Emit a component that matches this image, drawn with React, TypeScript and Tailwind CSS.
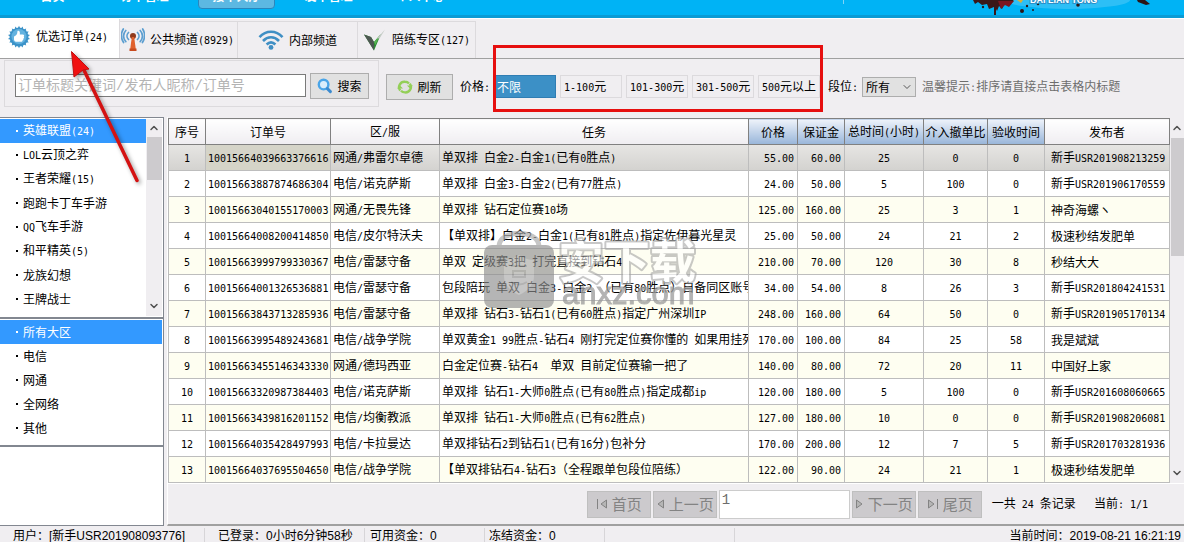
import React from 'react';
import { ChevronDown, ChevronUp } from 'lucide-react';

type Order = [string, string, string, string, string, string, string, string, string];

const NAV = ['首页', '订单管理', '接单大厅', '发单管理', '个人中心'];

const GAMES = ['英雄联盟(24)', 'LOL云顶之弈', '王者荣耀(15)', '跑跑卡丁车手游', 'QQ飞车手游', '和平精英(5)', '龙族幻想', '王牌战士'];

const AREAS = ['所有大区', '电信', '网通', '全网络', '其他'];

const PRICES = ['不限', '1-100元', '101-300元', '301-500元', '500元以上'];

const COLUMNS = [
  { title: '序号', width: 'w-[37px]', sortable: false },
  { title: '订单号', width: 'w-[125px]', sortable: false },
  { title: '区/服', width: 'w-[109px]', sortable: false },
  { title: '任务', width: '', sortable: false },
  { title: '价格', width: 'w-[49px]', sortable: true },
  { title: '保证金', width: 'w-[47px]', sortable: true },
  { title: '总时间(小时)', width: 'w-[79px]', sortable: true },
  { title: '介入撤单比', width: 'w-[64px]', sortable: true },
  { title: '验收时间', width: 'w-[57px]', sortable: true },
  { title: '发布者', width: 'w-[125px]', sortable: false },
];

const ORDERS: Order[] = [
  ['10015664039663376616', '网通/弗雷尔卓德', '单双排 白金2-白金1(已有0胜点)', '55.00', '60.00', '25', '0', '0', '新手USR201908213259'],
  ['10015663887874686304', '电信/诺克萨斯', '单双排 白金3-白金2(已有77胜点)', '24.00', '50.00', '5', '100', '0', '新手USR201906170559'],
  ['10015663040155170003', '网通/无畏先锋', '单双排 钻石定位赛10场', '125.00', '160.00', '25', '3', '1', '神奇海螺ヽ'],
  ['10015664008200414850', '电信/皮尔特沃夫', '【单双排】白金2-白金1(已有81胜点)指定佐伊暮光星灵', '25.00', '50.00', '24', '21', '2', '极速秒结发肥单'],
  ['10015663999799330367', '电信/雷瑟守备', '单双 定级赛3把 打完直接到钻石4', '210.00', '70.00', '120', '30', '8', '秒结大大'],
  ['10015664001326536881', '电信/雷瑟守备', '包段陪玩 单双 白金3-白金2 （已有80胜点）自备同区账号', '34.00', '54.00', '8', '26', '3', '新手USR201804241531'],
  ['10015663843713285936', '电信/雷瑟守备', '单双排 钻石3-钻石1(已有60胜点)指定广州深圳IP', '248.00', '160.00', '64', '50', '0', '新手USR201905170134'],
  ['10015663995489243681', '电信/战争学院', '单双黄金1 99胜点-钻石4 刚打完定位赛你懂的 如果用挂死', '170.00', '100.00', '84', '25', '58', '我是斌斌'],
  ['10015663455146343330', '网通/德玛西亚', '白金定位赛-钻石4  单双 目前定位赛输一把了', '140.00', '80.00', '72', '20', '11', '中国好上家'],
  ['10015663320987384403', '电信/诺克萨斯', '单双排 钻石1-大师0胜点(已有80胜点)指定成都ip', '120.00', '180.00', '5', '100', '0', '新手USR201608060665'],
  ['10015663439816201152', '电信/均衡教派', '单双排 钻石1-大师0胜点(已有62胜点)', '127.00', '180.00', '10', '0', '0', '新手USR201908206081'],
  ['10015664035428497993', '电信/卡拉曼达', '单双排钻石2到钻石1(已有16分)包补分', '170.00', '200.00', '12', '7', '5', '新手USR201703281936'],
  ['10015664037695504650', '电信/战争学院', '【单双排钻石4-钻石3（全程跟单包段位陪练）', '122.00', '90.00', '24', '21', '1', '极速秒结发肥单'],
];

// Latin runs are set in a half-width monospace next to the full-width Chinese
function Mixed({ text }: { text: string }) {
  return (
    <>
      {text.split(/([\x20-\x7e]+)/).map((part, i) =>
        i % 2 === 1 ? (
          <span key={i} className="font-['DejaVu_Sans_Mono',monospace] text-[10px] whitespace-pre">{part}</span>
        ) : (
          part
        )
      )}
    </>
  );
}

function BadgeIcon() {
  const teeth = Array.from({ length: 18 }, (_, i) => i * 20);
  return (
    <svg width="24" height="24" viewBox="0 0 24 24">
      {teeth.map((a) => (
        <path key={a} d="M10.4 4 L12 .8 L13.6 4Z" fill="#3f95c9" transform={`rotate(${a} 12 12)`} />
      ))}
      <circle cx="12" cy="12" r="9.4" fill="#3b92c8" />
      <circle cx="12" cy="11.5" r="7.6" fill="#63b2df" />
      <path d="M7 11.500c1.500-.4 2.600-1.500 3.200-3.200L10.500 6c1.600-.6 2.800.4 2.300 3.500h3c1.400 0 1.700 1.300.9 2 .6.8.4 1.600-.3 2 .2.900-.1 1.500-.8 1.800 0 1.100-.7 1.500-1.600 1.500H10c-1.800 0-3-.8-3-2.300Z" fill="#fff" />
    </svg>
  );
}

function AntennaIcon() {
  return (
    <svg width="24" height="24" viewBox="0 0 24 24" fill="none">
      <g stroke="#5c9ed0" strokeWidth="1.7" strokeLinecap="round">
        <path d="M7.5 4.5c-2 2-2 5 0 7M4.8 2.5c-3 3.200-3 8 0 11.200M2.300 1c-2.300 4-2.300 9.500.3 13.500" />
        <path d="M16.500 4.500c2 2 2 5 0 7M19.200 2.500c3 3.200 3 8 0 11.200M21.700 1c2.300 4 2.300 9.500-.3 13.500" />
      </g>
      <circle cx="12" cy="8" r="3" fill="#8f3a1c" />
      <path d="M10.800 9h2.400l1.600 12.500h-5.600Z" fill="#e0602c" />
      <path d="M8.500 20.500h7v2.500h-7z" fill="#c84a1e" />
    </svg>
  );
}

function WifiIcon() {
  return (
    <svg width="26" height="22" viewBox="0 0 26 22" fill="none" stroke="#3f8fc4" strokeWidth="2.600">
      <path d="M1.500 8.200C8 1 18 1 24.500 8.200" />
      <path d="M5 12c4.800-5 11.200-5 16 0" />
      <path d="M8.600 15.500c2.800-2.800 6-2.800 8.800 0" />
      <circle cx="13" cy="18.400" r="2.400" fill="#3f8fc4" stroke="none" />
    </svg>
  );
}

function CheckIcon() {
  return (
    <svg width="24" height="24" viewBox="0 0 24 24">
      <path d="M1 6.500 8 9 11 14 18 6 11 22.500Z" fill="#2c8a34" />
      <path d="M1 6.500 8 9 11 14V22.500Z" fill="#4d5751" />
      <path d="M11 14 17 7 12.500 17Z" fill="#57b552" />
      <path d="M14 10.500 22 1.500l-5.500 9Z" fill="#c3cac4" />
    </svg>
  );
}

function SearchIcon() {
  return (
    <svg width="16" height="16" viewBox="0 0 16 16" fill="none">
      <circle cx="6.600" cy="6.600" r="4.800" stroke="#4aa5e8" strokeWidth="2.400" fill="#d9edfb" />
      <path d="m10.400 10.600 3 3" stroke="#3b8bd0" strokeWidth="3" strokeLinecap="round" />
    </svg>
  );
}

function RefreshIcon() {
  return (
    <svg width="16" height="16" viewBox="0 0 16 16" fill="none" stroke="#93cf57" strokeWidth="2.400">
      <path d="M3.200 11.500A5.400 5.400 0 0 1 8 2.800c1.600 0 3 .6 4 1.700" />
      <path d="M12.800 4.800A5.400 5.400 0 0 1 8 13.400c-1.600 0-3-.6-4-1.700" />
      <path d="m16 6.500-3 3-3-3Z M0 9.500l3-3 3 3Z" fill="#93cf57" stroke="none" />
    </svg>
  );
}

function Banner() {
  return (
    <header className="relative h-[18px] overflow-hidden border-b-[3px] border-[#0a9bd4] bg-[#00b3f5]">
      <nav className="flex h-[9px] items-end gap-[15px] pl-[14px]">
        {NAV.map((item, i) => (
          <a
            key={item}
            href="#"
            className={
              i === 2
                ? 'flex h-8 w-[77px] shrink-0 items-end justify-center rounded-b-sm border border-[#2a86bd] bg-[#5cb8e2] pb-1 text-[12px] leading-4 font-bold text-white'
                : 'flex h-8 w-[77px] shrink-0 items-end justify-center pb-[5px] text-[12px] leading-4 font-bold text-white'
            }
          >
            {item}
          </a>
        ))}
      </nav>
      {/* Brand artwork */}
      <svg className="absolute top-0 right-0" width="344" height="18" viewBox="0 0 344 18">
        <path d="M3.500 0v4" stroke="#7fd4f7" />
        <ellipse cx="228" cy="0" rx="62" ry="9" fill="#5accf8" opacity=".5" />
        <path d="M133 0h41l-5 4-4-1-3 6-3-3-2 5-1-2v6h-2V7l-5 2-2-5-5 1-4-3-3 2Z" fill="#3a1718" />
        <path d="M158 1h16l-5 6-4-2-4 4Z" fill="#7b1620" />
        <g fill="#2c1517">
          <circle cx="143" cy="7" r="1.200" />
          <circle cx="182" cy="11" r="2" />
          <circle cx="187" cy="6" r="1.200" />
          <circle cx="193" cy="10" r="1" />
          <circle cx="198" cy="4" r="1.300" />
          <path d="M297 0h8l5 4-4 1-8-3Z" />
          <circle cx="238" cy="5" r="1.800" />
        </g>
        <path d="M177 0h6l-2 3Z" fill="#d7b13a" />
        <text x="190" y="3" fill="#fff" stroke="#2a8fc9" strokeWidth="2" paintOrder="stroke" fontSize="9" fontWeight="bold" fontFamily="'Liberation Sans', sans-serif">
          DAI LIAN TONG
        </text>
      </svg>
    </header>
  );
}

function ChannelTabs() {
  return (
    <div role="tablist" className="flex h-[41px] items-end border-t border-b border-t-white border-b-[#a0a0a0]">
      <button role="tab" aria-selected="true" className="flex h-full w-[120px] items-center gap-[5px] border-r border-[#dcdadd] bg-white pb-1 pl-[7px]">
        <BadgeIcon />
        <span><Mixed text="优选订单(24)" /></span>
      </button>
      <button role="tab" aria-selected="false" className="flex h-[37px] w-[118px] items-center gap-[5px] border-t border-r border-[#dcdadd] pl-px">
        <AntennaIcon />
        <span><Mixed text="公共频道(8929)" /></span>
      </button>
      <button role="tab" aria-selected="false" className="flex h-[37px] w-[120px] items-center gap-[5px] border-t border-r border-[#dcdadd] pl-5">
        <WifiIcon />
        <span>内部频道</span>
      </button>
      <button role="tab" aria-selected="false" className="flex h-[37px] w-[118px] items-center gap-[5px] border-t border-r border-[#dcdadd] pl-[5px]">
        <CheckIcon />
        <span><Mixed text="陪练专区(127)" /></span>
      </button>
    </div>
  );
}

function Toolbar() {
  return (
    <div className="flex h-[58px] shrink-0 items-start pt-px pl-1">
      <form className="flex h-[47px] w-[375px] shrink-0 items-center gap-1 border border-[#dcdadd] pt-1 pl-[10px]">
        <input
          type="text"
          aria-label="搜索订单"
          placeholder="订单标题关键词/发布人昵称/订单号"
          className="h-[23px] w-[291px] border border-[#7a7a7a] bg-white px-[2px] font-['Liberation_Mono','Noto_Sans_CJK_SC',monospace] text-[14px] outline-none placeholder:text-[#b4b4b4]"
        />
        <button type="button" className="flex h-[26px] w-[59px] items-center justify-center gap-1 border border-[#adadad] bg-[#e1e1e1]">
          <SearchIcon />
          搜索
        </button>
      </form>
      <div className="flex h-[53px] items-center pl-[7px] whitespace-nowrap">
        <button type="button" className="flex h-[26px] w-[67px] items-center justify-center gap-1 border border-[#adadad] bg-[#e1e1e1]">
          <RefreshIcon />
          刷新
        </button>
        <span className="pr-1 pl-[7px]"><Mixed text="价格:" /></span>
        <div className="flex gap-1">
          {PRICES.map((price, i) => (
            <button
              key={price}
              type="button"
              aria-pressed={i === 0}
              className={
                i === 0
                  ? 'h-[23px] w-[62px] border border-[#2f7db3] bg-[#3c90c6] pl-[2px] text-left text-white'
                  : 'h-[23px] w-[62px] border border-[#dcdadd] pl-[3px] text-left'
              }
            >
              <Mixed text={price} />
            </button>
          ))}
        </div>
        <label htmlFor="rank" className="pr-1 pl-2"><Mixed text="段位:" /></label>
        <div className="relative">
          <select id="rank" className="h-5 w-[54px] appearance-none border border-[#adadad] bg-[#e1e1e1] pl-[3px]">
            <option>所有</option>
          </select>
          <ChevronDown size={12} className="pointer-events-none absolute top-1 right-[3px] text-[#555555]" />
        </div>
        <span className="pl-[6px] text-[#6d6d6d]"><Mixed text="温馨提示:排序请直接点击表格内标题" /></span>
      </div>
    </div>
  );
}

function PickList({ items }: { items: string[] }) {
  return (
    <ul className="flex-1">
      {items.map((item, i) => (
        <li key={item}>
          <button
            type="button"
            className={
              i === 0
                ? 'flex h-6 w-full items-center bg-[#3399ff] pl-4 text-white'
                : 'flex h-6 w-full items-center pl-4'
            }
          >
            <span className="mr-[5px] h-[2px] w-[2px] bg-current"></span>
            <span><Mixed text={item} /></span>
          </button>
        </li>
      ))}
    </ul>
  );
}

function Sidebar() {
  return (
    <aside className="flex w-[164px] shrink-0 flex-col border-r border-b border-[#828790] bg-white">
      <div className="flex h-[200px] border-t border-[#828790] py-px pr-px">
        <PickList items={GAMES} />
        <div className="flex w-4 flex-col items-center bg-[#f0eef1] text-[#505050]">
          <ChevronUp size={12} strokeWidth={3} className="my-[3px]" />
          <div className="h-[43px] w-[15px] bg-[#cdcbce]"></div>
          <ChevronDown size={12} strokeWidth={3} className="mt-auto mb-1" />
        </div>
      </div>
      <div className="h-32 border-t-2 border-[#828790] pt-px pr-px">
        <PickList items={AREAS} />
      </div>
      <div className="flex-1 border-t-2 border-[#828790]"></div>
    </aside>
  );
}

function OrderTable() {
  return (
    <table className="w-full flex-1 table-fixed border-collapse bg-white">
      <thead>
        <tr className="h-[26px]">
          {COLUMNS.map((col) => (
            <th
              key={col.title}
              className={`${col.width} overflow-hidden border border-[#808080] p-0 font-normal whitespace-nowrap ${
                col.sortable ? 'bg-linear-to-b from-[#eef3fa] to-[#98b5d9]' : 'bg-linear-to-b from-white to-[#efedf1]'
              }`}
            >
              <Mixed text={col.title} />
            </th>
          ))}
        </tr>
      </thead>
      <tbody>
        {ORDERS.map(([id, server, task, price, deposit, hours, ratio, check, author], i) => (
          <tr
            key={id}
            className={`h-[26px] *:overflow-hidden *:border *:border-[#bdbdbd] *:py-0 *:whitespace-nowrap ${
              i === 0 ? 'bg-linear-to-b from-[#e6e5e3] to-[#d3d2cf]' : i % 2 === 0 ? 'bg-[#fefef1]' : 'bg-white'
            }`}
          >
            <td className="text-center"><Mixed text={String(i + 1)} /></td>
            <td className={i === 0 ? 'bg-[#d5d4c8] pl-[2px]' : 'pl-[2px]'}><Mixed text={id} /></td>
            <td className="pl-[2px]"><Mixed text={server} /></td>
            <td className="pl-[2px]"><Mixed text={task} /></td>
            <td className="pr-[3px] text-right"><Mixed text={price} /></td>
            <td className="pr-[3px] text-right"><Mixed text={deposit} /></td>
            <td className="text-center"><Mixed text={hours} /></td>
            <td className="text-center"><Mixed text={ratio} /></td>
            <td className="text-center"><Mixed text={check} /></td>
            <td className="pl-[6px]"><Mixed text={author} /></td>
          </tr>
        ))}
      </tbody>
    </table>
  );
}

function Pager() {
  const button = 'flex h-[27px] w-16 shrink-0 items-center justify-center gap-1 overflow-hidden border border-[#bfbfbf] bg-[#cccacd] text-[15px] whitespace-nowrap text-[#838383]';
  return (
    <div className="flex h-10 items-center justify-end gap-[2px] pr-9">
      <button type="button" disabled className={button}>
        <svg width="12" height="10" viewBox="0 0 12 10" fill="#b5b5b5" stroke="#838383"><path d="M1.500 0v10" /><path d="M10.500 1v8L5 5Z" /></svg>
        首页
      </button>
      <button type="button" disabled className={button}>
        <svg width="9" height="10" viewBox="0 0 9 10" className="shrink-0" fill="#b5b5b5" stroke="#838383"><path d="M7.500 1v8L2 5Z" /></svg>
        上一页
      </button>
      <input
        type="text"
        aria-label="页码"
        defaultValue="1"
        className="h-[29px] w-[131px] border border-[#cccccc] bg-white px-[2px] pb-2 font-['Liberation_Mono',monospace] text-[14px] text-[#6d6d6d] outline-none"
      />
      <button type="button" disabled className={button}>
        <svg width="9" height="10" viewBox="0 0 9 10" className="shrink-0" fill="#b5b5b5" stroke="#838383"><path d="M1.500 1v8L7 5Z" /></svg>
        下一页
      </button>
      <button type="button" disabled className={button}>
        <svg width="12" height="10" viewBox="0 0 12 10" fill="#b5b5b5" stroke="#838383"><path d="M10.500 0v10" /><path d="M1.500 1v8L7 5Z" /></svg>
        尾页
      </button>
      <span className="pl-2"><Mixed text="一共 24 条记录" /></span>
      <span className="pl-4"><Mixed text="当前: 1/1" /></span>
    </div>
  );
}

function StatusBar() {
  return (
    <footer className="flex h-[17px] items-center overflow-hidden pt-[2px] font-['Liberation_Sans','Noto_Sans_CJK_SC',sans-serif] whitespace-nowrap">
      <span className="w-[205px] border-r border-[#d7d5d8] pl-[13px]">用户：[新手USR201908093776]</span>
      <span className="w-[160px] border-r border-[#d7d5d8] pl-[13px]">已登录：0小时6分钟58秒</span>
      <span className="w-[120px] border-r border-[#d7d5d8] pl-[5px]">可用资金：0</span>
      <span className="w-[120px] border-r border-[#d7d5d8] pl-1">冻结资金：0</span>
      <span className="h-4 w-[130px] border-r border-[#d7d5d8]"></span>
      <span className="ml-auto pr-[3px]">当前时间：2019-08-21 16:21:19</span>
    </footer>
  );
}

function Watermark() {
  return (
    <svg className="pointer-events-none absolute top-[228px] left-[482px]" width="220" height="84" viewBox="0 0 220 84">
      <g opacity=".65">
        <path d="M17 20v-2C18 1 56 1 57 18v2" fill="none" stroke="#a8a8a8" strokeWidth="5" />
        <rect x="2" y="17" width="70" height="63" rx="8" fill="#8f8f8f" />
        <path d="M22 32q8 0 15-5 7 5 15 5v16q0 12-15 19-15-7-15-19Z" fill="#a9a9a9" />
        <path d="M29 38h16M31 43h12v6H31zM29 54q8 5 16 0" fill="none" stroke="#8a8a8a" strokeWidth="2" />
      </g>
      <text x="76" y="50" fontSize="46" fontWeight="bold" fill="#fff" stroke="#a5a5a5" strokeWidth="4" strokeLinejoin="round" paintOrder="stroke" opacity=".6" fontFamily="'Noto Sans CJK SC', sans-serif">
        安下载
      </text>
      <text x="80" y="76" fontSize="31" fill="#9a9a9a" stroke="#9a9a9a" opacity=".75" fontFamily="'Liberation Sans', sans-serif">
        anxz.com
      </text>
    </svg>
  );
}

function Callouts() {
  return (
    <>
      <div className="pointer-events-none absolute top-[45px] left-[493px] h-[67px] w-[330px] border-[3px] border-[#e60f0f]"></div>
      <svg className="pointer-events-none absolute top-[48px] left-[66px] drop-shadow-[2px_2px_2px_rgba(0,0,0,0.4)]" width="80" height="140" viewBox="0 0 80 140">
        <path d="M16 18 71 132.500" stroke="#d41212" strokeWidth="3.500" strokeLinecap="round" />
        <path d="M5.500 3.500 23 21 17 22 8 29Z" fill="#f01010" stroke="#c01010" />
      </svg>
    </>
  );
}

export default function App() {
  return (
    <div className="relative flex min-h-screen flex-col overflow-hidden bg-[#f0eef1] font-['Noto_Sans_CJK_SC',sans-serif] text-[12px] leading-4 text-black">
      <Banner />
      <ChannelTabs />
      <Toolbar />
      <main className="flex flex-1">
        <Sidebar />
        <section className="ml-[3px] flex min-w-0 flex-1 flex-col border-b-2 border-l border-b-[#a0a0a0] border-l-white pt-px">
          <div className="flex border-b border-white">
            <OrderTable />
            <div className="flex w-[14px] shrink-0 flex-col items-center text-[#505050]">
              <ChevronUp size={12} strokeWidth={3} className="my-1" />
              <div className="h-[118px] w-[13px] bg-[#cdcbce]"></div>
              <ChevronDown size={12} strokeWidth={3} className="mt-auto mb-1" />
            </div>
          </div>
          <Pager />
        </section>
      </main>
      <StatusBar />
      <Watermark />
      <Callouts />
    </div>
  );
}
